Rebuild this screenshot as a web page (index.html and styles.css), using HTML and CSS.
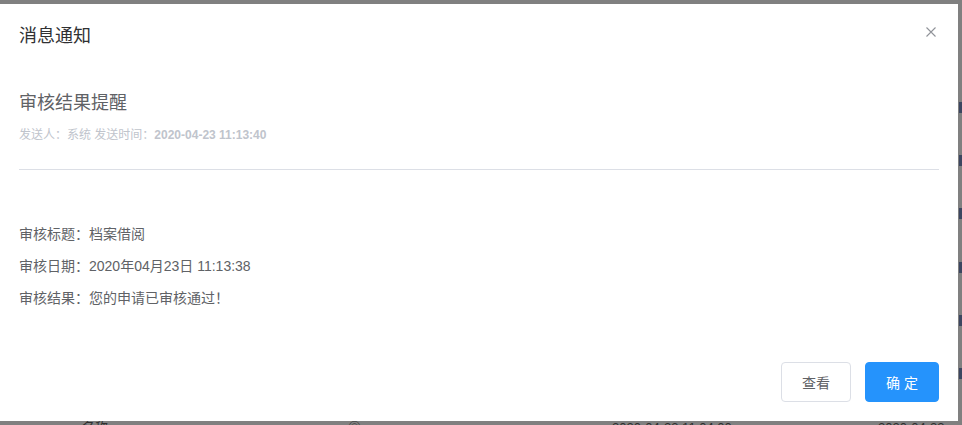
FILE: index.html
```html
<!DOCTYPE html>
<html lang="zh">
<head>
<meta charset="utf-8">
<title>消息通知</title>
<link rel="stylesheet" href="styles.css">
</head>
<body>
<div class="backdrop">
  <div class="bg-marks">
    <span class="mark" style="top:102px"></span>
    <span class="mark" style="top:155px"></span>
    <span class="mark" style="top:208px"></span>
    <span class="mark" style="top:262px"></span>
    <span class="mark" style="top:315px"></span>
    <span class="mark" style="top:368px"></span>
  </div>
  <div class="bg-bottom">
    <span class="bt" style="left:82px">名称</span>
    <span class="bt" style="left:348px">◎</span>
    <span class="bt" style="left:612px">2020-04-23 11:04:00</span>
    <span class="bt" style="left:878px">2020-04-23</span>
  </div>
</div>
<div class="dialog">
  <div class="dialog-header">
    <span class="dialog-title">消息通知</span>
    <button class="close" aria-label="关闭">
      <svg width="10" height="10" viewBox="0 0 10 10"><path d="M0.5 0.5 L9.5 9.5 M9.5 0.5 L0.5 9.5" stroke="#909399" stroke-width="1.1" fill="none"/></svg>
    </button>
  </div>
  <div class="dialog-body">
    <h2 class="msg-title">审核结果提醒</h2>
    <div class="msg-meta">发送人：系统 发送时间：<b>2020-04-23 11:13:40</b></div>
    <div class="divider"></div>
    <div class="msg-content">
      <p>审核标题：档案借阅</p>
      <p>审核日期：2020年04月23日 11:13:38</p>
      <p>审核结果：您的申请已审核通过！</p>
    </div>
  </div>
  <div class="dialog-footer">
    <button class="btn btn-default">查看</button>
    <button class="btn btn-primary">确 定</button>
  </div>
</div>
</body>
</html>
```
FILE: styles.css
```css
html, body {
  margin: 0;
  padding: 0;
}
body {
  width: 962px;
  height: 425px;
  overflow: hidden;
  background: #808080;
  font-family: "Liberation Sans", "Noto Sans CJK SC", sans-serif;
  position: relative;
}
.backdrop {
  position: absolute;
  inset: 0;
  background: #808080;
}
.mark {
  position: absolute;
  left: 959px;
  width: 3px;
  height: 11px;
  background: #3c4660;
}
.bt {
  position: absolute;
  top: 420px;
  font-size: 13px;
  line-height: 16px;
  color: #2e2e2e;
  white-space: nowrap;
}
.dialog {
  position: relative;
  margin-top: 4px;
  width: 958px;
  height: 417px;
  background: #fff;
  box-sizing: border-box;
  padding: 0 19px 19px;
  display: flex;
  flex-direction: column;
}
.dialog-header {
  display: flex;
  align-items: center;
  justify-content: space-between;
  padding: 20px 0;
}
.dialog-title {
  font-size: 18px;
  line-height: 24px;
  color: #303133;
}
.close {
  border: 0;
  background: none;
  padding: 0;
  width: 10px;
  height: 10px;
  margin-right: 3px;
  margin-top: -8px;
  display: flex;
}
.dialog-body {
  flex: 1;
}
.msg-title {
  margin: 23px 0 0;
  font-size: 18px;
  line-height: 24px;
  font-weight: normal;
  color: #5f6266;
}
.msg-meta {
  margin-top: 10px;
  font-size: 12px;
  line-height: 20px;
  color: #c0c4cc;
}
.msg-meta b {
  font-weight: bold;
}
.divider {
  margin-top: 24px;
  height: 1px;
  background: #dcdfe6;
}
.msg-content {
  margin-top: 48px;
}
.msg-content p {
  margin: 0;
  font-size: 14px;
  line-height: 32px;
  color: #606266;
}
.dialog-footer {
  display: flex;
  justify-content: flex-end;
  gap: 14px;
}
.btn {
  height: 40px;
  border-radius: 4px;
  font-family: inherit;
  font-size: 14px;
  padding: 0;
  box-sizing: border-box;
}
.btn-default {
  width: 70px;
  background: #fff;
  border: 1px solid #dcdfe6;
  color: #606266;
}
.btn-primary {
  width: 74px;
  background: #2593fc;
  border: 1px solid #2593fc;
  color: #fff;
}
```
